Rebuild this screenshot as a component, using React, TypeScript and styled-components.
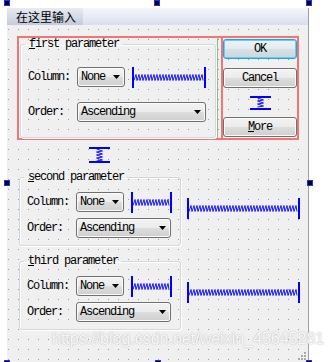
import React from "react";
import styled, { createGlobalStyle } from "styled-components";

const GlobalStyle = createGlobalStyle`
  html, body {
    margin: 0;
    padding: 0;
    background: #ffffff;
  }
  body {
    width: 332px;
    height: 362px;
    overflow: hidden;
    font-family: "Liberation Mono", "DejaVu Sans Mono", monospace;
    font-size: 12px;
    letter-spacing: -1.2px;
    color: #000;
  }
`;

const Stage = styled.div`
  position: relative;
  width: 332px;
  height: 362px;
  padding: 8px 0 0 7px;
  box-sizing: border-box;
`;

/* designer canvas: 10px dot grid built from two masking gradients */
const Form = styled.div`
  position: relative;
  width: 302px;
  height: 354px;
  box-sizing: border-box;
  border-right: 1px solid #a0a0a0;
  background-color: #9a9a9a;
  background-image: linear-gradient(to right, transparent 1px, #f0f0f0 1px),
    linear-gradient(to bottom, transparent 1px, #f0f0f0 1px);
  background-size: 10px 10px;
  background-position: 1px 1px;
  display: flex;
  flex-direction: column;
`;

const MenuBar = styled.div`
  height: 17px;
  display: flex;
  background: linear-gradient(#f4f6fb, #d9dfee);
`;

const MenuItem = styled.div`
  width: 76px;
  box-sizing: border-box;
  padding-left: 9px;
  font: 12px/17px "Noto Sans CJK SC", sans-serif;
  letter-spacing: 0;
  background: linear-gradient(#e8ebf2, #c3cada);
`;

const Body = styled.div`
  padding: 11px 0 0 10px;
  display: flex;
  flex-direction: column;
  align-items: flex-start;
`;

const LayoutFrame = styled.div`
  width: 282px;
  height: 104px;
  box-sizing: border-box;
  border: 2px solid #f07676;
  display: flex;
  align-items: stretch;
`;

const Splitter = styled.div`
  width: 1px;
  margin: 0 3px 0 1px;
  background: #86c286;
`;

const ButtonColumn = styled.div`
  width: 76px;
  box-sizing: border-box;
  border-left: 2px solid #f07676;
  padding-top: 1px;
  display: flex;
  flex-direction: column;
  align-items: stretch;
`;

const PushButton = styled.div<{ $default?: boolean; $mt?: number }>`
  height: 20px;
  box-sizing: border-box;
  margin-top: ${(p) => p.$mt ?? 0}px;
  border: 1px solid ${(p) => (p.$default ? "#2f9fd8" : "#707070")};
  border-radius: 3px;
  box-shadow: inset 0 0 0 1px ${(p) => (p.$default ? "#5fd0f6" : "#fbfbfb")};
  background: ${(p) =>
    p.$default
      ? "linear-gradient(#eef3f6 0%, #e4ebef 50%, #d6e0e6 51%, #ccd7dd 100%)"
      : "linear-gradient(#f3f3f3 0%, #ebebeb 50%, #dddddd 51%, #cfcfcf 100%)"};
  display: flex;
  align-items: center;
  justify-content: center;
`;

const ButtonSpring = styled.div`
  margin: 8px 0 7px;
  display: flex;
  justify-content: center;
`;

const Group = styled.fieldset<{ $w: number; $pt: number; $pb: number; $gap: number; $ml?: number }>`
  margin: 0 0 0 ${(p) => p.$ml ?? 0}px;
  width: ${(p) => p.$w}px;
  min-width: 0;
  box-sizing: border-box;
  border: 1px solid #d2d9de;
  border-radius: 3px;
  box-shadow: inset 1px 1px 0 #ffffff, 1px 1px 0 #ffffff;
  padding: ${(p) => p.$pt}px 0 ${(p) => p.$pb}px 7px;
  display: flex;
  flex-direction: column;
  gap: ${(p) => p.$gap}px;
`;

const Title = styled.legend`
  margin-left: -3px;
  padding: 0 3px 0 4px;
  line-height: 12px;
  height: 12px;
`;

const Row = styled.div`
  display: flex;
  align-items: center;
  height: 20px;
`;

const Label = styled.span`
  width: 49px;
  flex: none;
`;

const Combo = styled.div<{ $w: number }>`
  width: ${(p) => p.$w}px;
  height: 20px;
  flex: none;
  box-sizing: border-box;
  border: 1px solid #707070;
  border-radius: 3px;
  box-shadow: inset 0 0 0 1px #fbfbfb;
  background: linear-gradient(#f3f3f3 0%, #ebebeb 50%, #dddddd 51%, #cfcfcf 100%);
  display: flex;
  align-items: center;
  padding: 0 4px 0 3px;
`;

const ComboText = styled.span`
  flex: 1;
`;

const Gap = styled.div`
  width: 7px;
  flex: none;
`;

const VSpacerRow = styled.div`
  width: 161px;
  margin: 7px 0 0 2px;
  display: flex;
  justify-content: center;
`;

const GroupRow = styled.div<{ $mt: number }>`
  margin: ${(p) => p.$mt}px 0 0 2px;
  display: flex;
  align-items: center;
  gap: 6px;
`;

const Handle = styled.div<{ $x: number; $y: number }>`
  position: absolute;
  left: ${(p) => p.$x}px;
  top: ${(p) => p.$y}px;
  width: 6px;
  height: 6px;
  box-sizing: border-box;
  background: #000;
  border: 1px solid #1e2cff;
`;

const Watermark = styled.div`
  position: absolute;
  left: 52px;
  top: 330px;
  font: 16px "Liberation Sans", Arial, sans-serif;
  letter-spacing: 0;
  color: rgba(255, 255, 255, 0.9);
  text-shadow: 0 0 1px #b9b9b9, 0 0 2px #d0d0d0;
  white-space: nowrap;
  pointer-events: none;
`;

const Grip = styled.svg`
  position: absolute;
  right: 2px;
  bottom: 2px;
`;

const BLUE = "#0000ff";

const HSpacer = ({ w, h = 21 }: { w: number; h?: number }) => {
  const mid = h / 2;
  let d = `M2 ${mid + 3}`;
  for (let x = 2; x < w - 4; x += 3) {
    d += ` L${x + 2} ${mid - 3} L${x + 3} ${mid + 3}`;
  }
  return (
    <svg width={w} height={h} style={{ display: "block", flex: "none" }}>
      <rect x={0} y={0} width={2} height={h} fill={BLUE} />
      <rect x={w - 2} y={0} width={2} height={h} fill={BLUE} />
      <path d={d} stroke={BLUE} strokeWidth={0.9} fill="none" />
    </svg>
  );
};

const VSpacer = ({ h, w = 21 }: { h: number; w?: number }) => {
  const mid = w / 2;
  let d = `M${mid - 3} 2`;
  for (let y = 2; y < h - 4; y += 3) {
    d += ` L${mid + 3} ${y + 2} L${mid - 3} ${y + 3}`;
  }
  return (
    <svg width={w} height={h} style={{ display: "block" }}>
      <rect x={0} y={0} width={w} height={2} fill={BLUE} />
      <rect x={0} y={h - 2} width={w} height={2} fill={BLUE} />
      <path d={d} stroke={BLUE} strokeWidth={0.9} fill="none" />
    </svg>
  );
};

const Arrow = () => (
  <svg width={7} height={4} style={{ display: "block", flex: "none" }}>
    <polygon points="0,0 7,0 3.5,4" fill="#000" />
  </svg>
);

const ComboBox = ({ w, text }: { w: number; text: string }) => (
  <Combo $w={w}>
    <ComboText>{text}</ComboText>
    <Arrow />
  </Combo>
);

const ParamGroup = ({
  mnemonic,
  rest,
  wide,
}: {
  mnemonic: string;
  rest: string;
  wide?: boolean;
}) => (
  <Group
    $w={wide ? 196 : 162}
    $ml={wide ? 1 : 0}
    $pt={wide ? 17 : 9}
    $pb={wide ? 15 : 7}
    $gap={wide ? 15 : 6}
  >
    <Title>
      <u>{mnemonic}</u>
      {rest}
    </Title>
    <Row>
      <Label>Column:</Label>
      <ComboBox w={48} text="None" />
      <Gap />
      <HSpacer w={wide ? 74 : 41} />
    </Row>
    <Row>
      <Label>Order:</Label>
      <ComboBox w={wide ? 129 : 95} text="Ascending" />
    </Row>
  </Group>
);

const handles: [number, number][] = [
  [4, 0],
  [154, 0],
  [306, 0],
  [4, 180],
  [307, 180],
  [4, 360],
  [155, 360],
  [306, 360],
];

export default function App() {
  return (
    <>
      <GlobalStyle />
      <Stage>
        <Form>
          <MenuBar>
            <MenuItem>在这里输入</MenuItem>
          </MenuBar>
          <Body>
            <LayoutFrame>
              <ParamGroup mnemonic="f" rest="irst parameter" wide />
              <Splitter />
              <ButtonColumn>
                <PushButton $default>OK</PushButton>
                <PushButton $mt={9}>Cancel</PushButton>
                <ButtonSpring>
                  <VSpacer h={14} />
                </ButtonSpring>
                <PushButton>
                  <u>M</u>ore
                </PushButton>
              </ButtonColumn>
            </LayoutFrame>
            <VSpacerRow>
              <VSpacer h={16} />
            </VSpacerRow>
            <GroupRow $mt={8}>
              <ParamGroup mnemonic="s" rest="econd parameter" />
              <HSpacer w={113} />
            </GroupRow>
            <GroupRow $mt={9}>
              <ParamGroup mnemonic="t" rest="hird parameter" />
              <HSpacer w={113} />
            </GroupRow>
          </Body>
          <Grip width={8} height={8}>
            {[
              [6, 0],
              [6, 3],
              [3, 3],
              [6, 6],
              [3, 6],
              [0, 6],
            ].map(([x, y]) => (
              <rect key={`${x}-${y}`} x={x} y={y} width={2} height={2} fill="#a8a8a8" />
            ))}
          </Grip>
        </Form>
        <Watermark>https://blog.csdn.net/weixin_45645281</Watermark>
        {handles.map(([x, y]) => (
          <Handle key={`${x}-${y}`} $x={x} $y={y} />
        ))}
      </Stage>
    </>
  );
}
